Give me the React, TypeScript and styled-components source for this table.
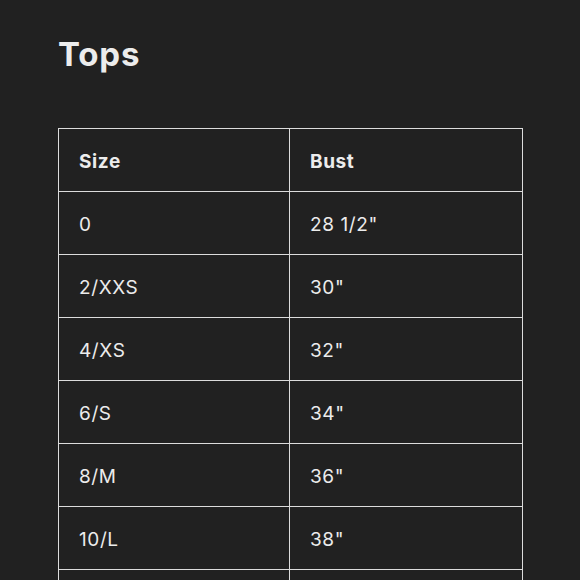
import styled, { createGlobalStyle } from "styled-components";

const rows = [
  { size: "0", bust: "28 1/2\"" },
  { size: "2/XXS", bust: "30\"" },
  { size: "4/XS", bust: "32\"" },
  { size: "6/S", bust: "34\"" },
  { size: "8/M", bust: "36\"" },
  { size: "10/L", bust: "38\"" },
  { size: "12/XL", bust: "40\"" },
];

const GlobalStyle = createGlobalStyle`
  html, body {
    margin: 0;
    padding: 0;
    background: #212121;
  }
  body {
    font-family: Inter, "Noto Sans", sans-serif;
    color: #ececec;
  }
`;

const Page = styled.div`
  padding: 32px 58px 0 58px;
  height: 580px;
  overflow: hidden;
  box-sizing: border-box;
`;

const Title = styled.h1`
  margin: 0 0 52px 0;
  font-size: 33px;
  line-height: 44px;
  font-weight: 700;
  letter-spacing: 0.8px;
`;

const Table = styled.table`
  width: 465px;
  border-collapse: collapse;
  table-layout: fixed;
`;

const Cell = styled.td<{ $head?: boolean }>`
  border: 1px solid #dcdcdc;
  padding: 22px 20px 18px 20px;
  height: 22px;
  font-size: 19px;
  line-height: 22px;
  font-weight: ${({ $head }) => ($head ? 700 : 400)};
  text-align: left;
  vertical-align: middle;
  letter-spacing: 0.6px;
`;

const App = () => {
  return (
    <>
      <GlobalStyle />
      <Page>
        <Title>Tops</Title>
        <Table>
          <colgroup>
            <col style={{ width: "231px" }} />
            <col />
          </colgroup>
          <tbody>
            <tr>
              <Cell as="th" $head>
                Size
              </Cell>
              <Cell as="th" $head>
                Bust
              </Cell>
            </tr>
            {rows.map((row) => (
              <tr key={row.size}>
                <Cell>{row.size}</Cell>
                <Cell>{row.bust}</Cell>
              </tr>
            ))}
          </tbody>
        </Table>
      </Page>
    </>
  );
};

export default App;
